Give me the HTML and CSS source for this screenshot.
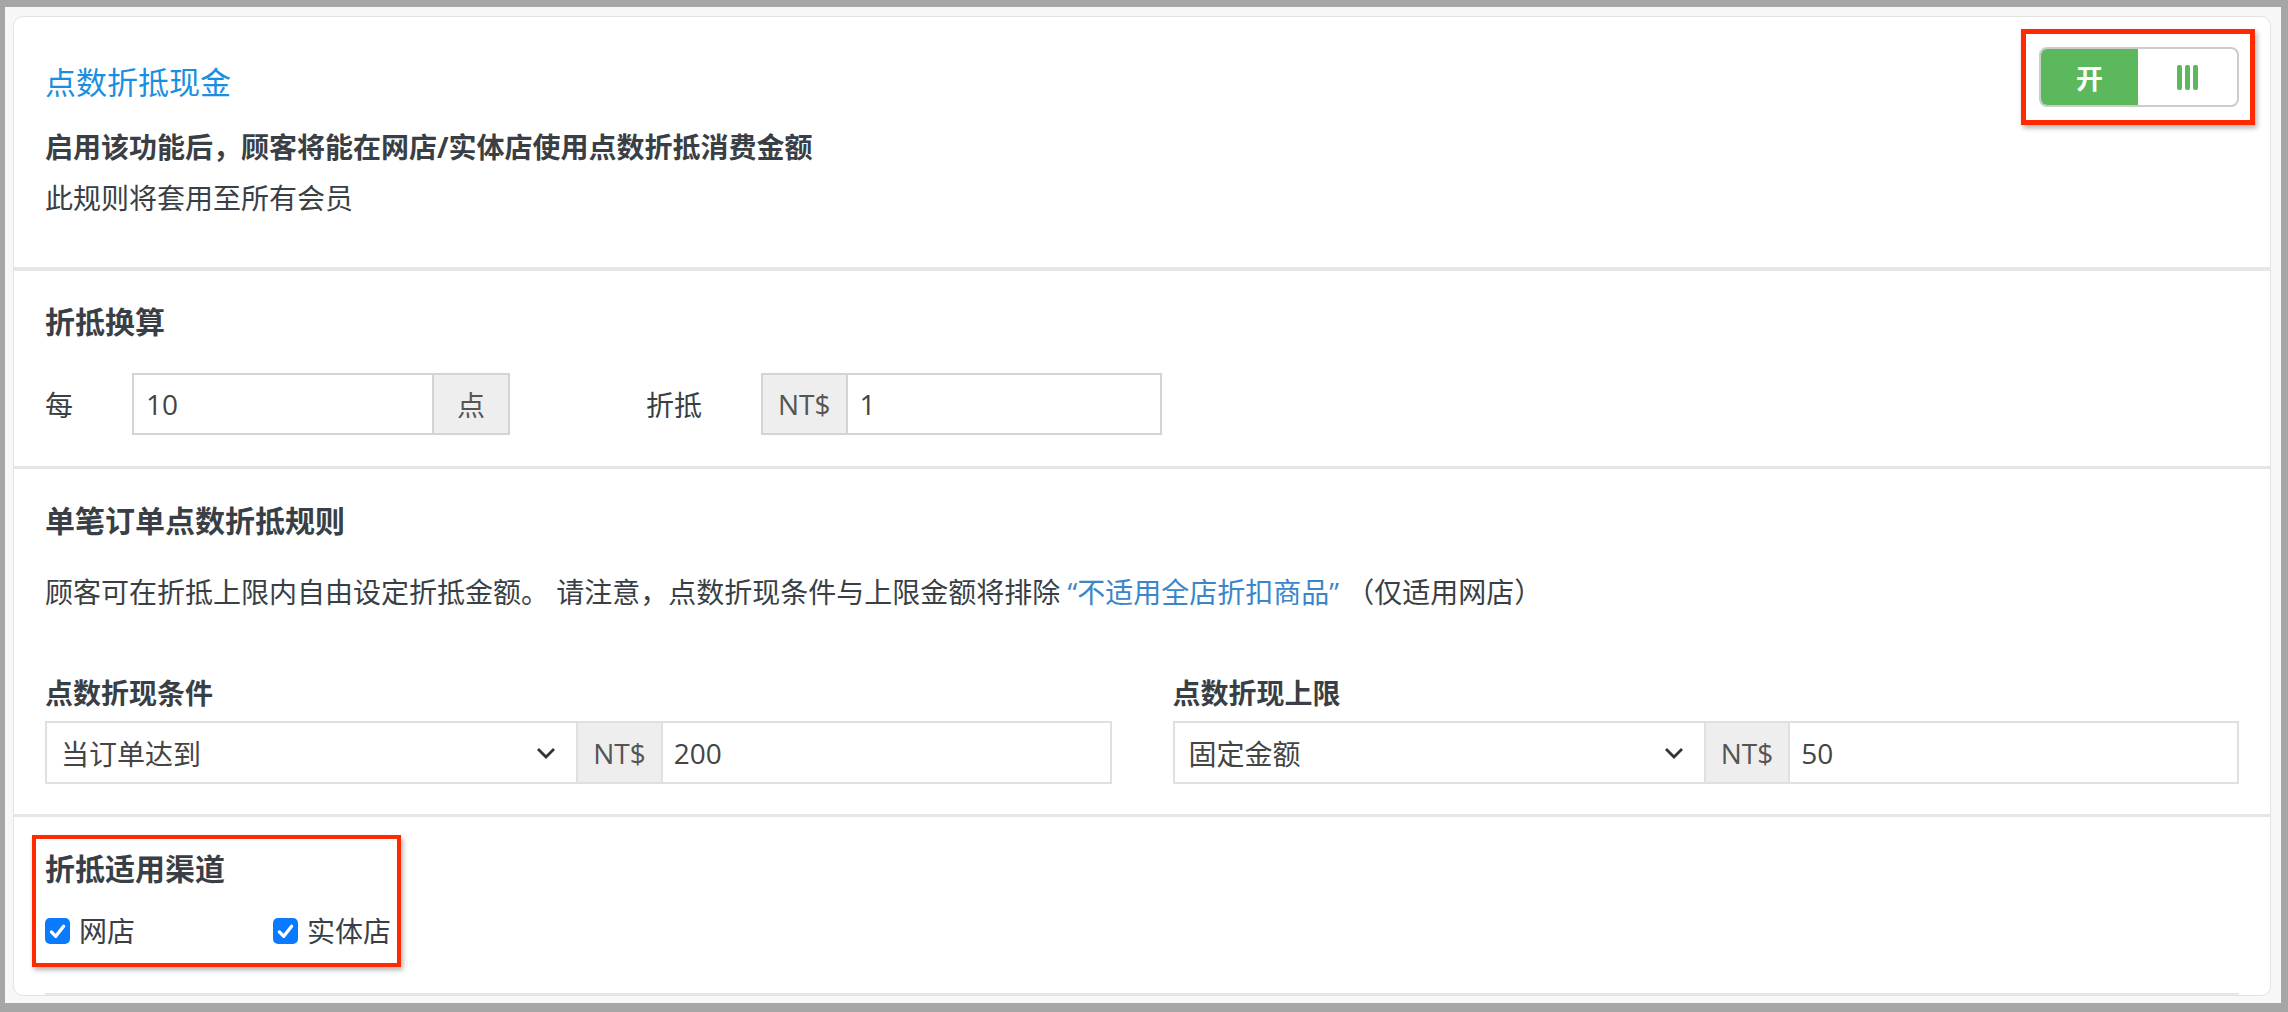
FILE: index.html
```html
<!DOCTYPE html>
<html lang="zh-CN">
<head>
    <meta charset="UTF-8">
    <meta name="viewport" content="width=device-width, initial-scale=1.0">
    <title>点数折抵现金</title>
    <link rel="stylesheet" href="styles.css">
</head>
<body>
<div class="frame">
    <div class="card">
        <!-- 开关与说明 -->
        <section class="sec sec-intro">
            <div class="intro">
                <h1 class="title">点数折抵现金</h1>
                <p class="lead">启用该功能后，顾客将能在网店/实体店使用点数折抵消费金额</p>
                <p class="note">此规则将套用至所有会员</p>
            </div>
            <div class="mark mark-toggle">
                <div class="toggle">
                    <span class="toggle-on">开</span>
                    <span class="toggle-handle"><i></i><i></i><i></i></span>
                </div>
            </div>
        </section>

        <!-- 折抵换算 -->
        <section class="sec sec-rate">
            <h2 class="sec-title">折抵换算</h2>
            <div class="rate-row">
                <span class="rate-label">每</span>
                <div class="group group-points">
                    <span class="field">10</span>
                    <span class="addon addon-points">点</span>
                </div>
                <span class="rate-label rate-label-wide">折抵</span>
                <div class="group group-cash">
                    <span class="addon">NT$</span>
                    <span class="field">1</span>
                </div>
            </div>
        </section>

        <!-- 单笔订单规则 -->
        <section class="sec sec-rule">
            <h2 class="sec-title">单笔订单点数折抵规则</h2>
            <p class="desc">顾客可在折抵上限内自由设定折抵金额。 请注意，点数折现条件与上限金额将排除 <a href="#" class="link">“不适用全店折扣商品”</a> （仅适用网店）</p>
            <div class="cols">
                <div class="col">
                    <div class="col-label">点数折现条件</div>
                    <div class="group">
                        <span class="select">当订单达到
                            <svg class="chev" viewBox="0 0 20 12" width="20" height="12"><path d="M2 2 L10 10 L18 2" fill="none" stroke="#333" stroke-width="2.8"/></svg>
                        </span>
                        <span class="addon">NT$</span>
                        <span class="field field-grow">200</span>
                    </div>
                </div>
                <div class="col">
                    <div class="col-label">点数折现上限</div>
                    <div class="group">
                        <span class="select">固定金额
                            <svg class="chev" viewBox="0 0 20 12" width="20" height="12"><path d="M2 2 L10 10 L18 2" fill="none" stroke="#333" stroke-width="2.8"/></svg>
                        </span>
                        <span class="addon">NT$</span>
                        <span class="field field-grow">50</span>
                    </div>
                </div>
            </div>
        </section>

        <!-- 适用渠道 -->
        <section class="sec sec-channel">
            <div class="mark mark-channel">
                <h2 class="sec-title">折抵适用渠道</h2>
                <div class="checks">
                    <label class="check check-first"><span class="box"><svg viewBox="0 0 24 24" width="21" height="21"><path d="M5 12.5 L10 17.5 L19 6" fill="none" stroke="#fff" stroke-width="3.8" stroke-linecap="round" stroke-linejoin="round"/></svg></span><span>网店</span></label>
                    <label class="check"><span class="box"><svg viewBox="0 0 24 24" width="21" height="21"><path d="M5 12.5 L10 17.5 L19 6" fill="none" stroke="#fff" stroke-width="3.8" stroke-linecap="round" stroke-linejoin="round"/></svg></span><span>实体店</span></label>
                </div>
            </div>
            <div class="end-line"></div>
        </section>
    </div>
</div>
</body>
</html>
```

FILE: styles.css
```css
html, body {
    margin: 0;
    padding: 0;
}

body {
    background-color: #a6a6a6;
    padding: 7px 7px 9px 5px;
    height: 1012px;
    box-sizing: border-box;
    font-family: "Open Sans", "Noto Sans CJK SC", sans-serif;
    color: #3a3f46;
}

.frame {
    background-color: #f7f7f7;
    padding: 9px 10px 7px 8px;
    height: 100%;
    box-sizing: border-box;
}

.card {
    background-color: #fff;
    border: 1px solid #e3e3e3;
    border-radius: 10px;
    height: 100%;
    box-sizing: border-box;
    overflow: hidden;
}

.sec {
    padding: 0 31px;
    box-sizing: border-box;
}

p, h1, h2 {
    margin: 0;
}

/* ---- intro ---- */
.sec-intro {
    display: flex;
    justify-content: space-between;
    align-items: flex-start;
    height: 254px;
    border-bottom: 4px solid #e6e6e6;
}

.intro {
    padding-top: 43px;
}

.title {
    font-size: 31px;
    font-weight: normal;
    line-height: 44px;
    color: #1a8fdf;
}

.lead {
    font-size: 28px;
    font-weight: bold;
    line-height: 40px;
    margin-top: 23px;
}

.note {
    font-size: 28px;
    line-height: 40px;
    margin-top: 11px;
}

.mark {
    border: 5px solid #ff2a00;
    box-shadow: 2px 3px 5px rgba(0, 0, 0, 0.3);
    box-sizing: border-box;
}

.mark-toggle {
    margin-top: 12px;
    margin-right: -16px;
    padding: 13px 11px 13px 13px;
}

.toggle {
    display: flex;
    width: 200px;
    height: 60px;
    border: 2px solid #cccccc;
    border-radius: 8px;
    box-sizing: border-box;
    overflow: hidden;
}

.toggle-on {
    width: 97px;
    background-color: #5cb85c;
    color: #fff;
    font-size: 27px;
    font-weight: bold;
    display: flex;
    align-items: center;
    justify-content: center;
}

.toggle-handle {
    flex: 1;
    display: flex;
    align-items: center;
    justify-content: center;
    gap: 3px;
}

.toggle-handle i {
    display: block;
    width: 5px;
    height: 25px;
    border-radius: 2px;
    background-color: #5cb85c;
}

/* ---- sections ---- */
.sec-title {
    font-size: 30px;
    font-weight: bold;
    line-height: 40px;
}

.sec-rate {
    padding-top: 31px;
    padding-bottom: 31px;
    border-bottom: 3px solid #e6e6e6;
}

.rate-row {
    display: flex;
    align-items: center;
    margin-top: 31px;
    font-size: 28px;
}

.rate-label {
    width: 87px;
}

.rate-label-wide {
    width: 115px;
    margin-left: 136px;
}

.group {
    display: flex;
    height: 62px;
    border: 2px solid #d4d4d4;
    box-sizing: border-box;
    font-size: 28px;
}

.group-points {
    width: 378px;
}

.group-cash {
    width: 401px;
}

.field {
    flex: 1;
    display: flex;
    align-items: center;
    padding-left: 12px;
    color: #444;
}

.addon {
    display: flex;
    align-items: center;
    justify-content: center;
    background-color: #eeeeee;
    color: #555;
    padding: 0 15px;
    border-right: 2px solid #d4d4d4;
}

.group .field + .addon {
    border-right: none;
    border-left: 2px solid #d4d4d4;
}

.addon-points {
    width: 76px;
    padding: 0;
    box-sizing: border-box;
}

.sec-rule {
    padding-top: 32px;
    padding-bottom: 30px;
    border-bottom: 3px solid #e6e6e6;
}

.desc {
    font-size: 28px;
    line-height: 40px;
    margin-top: 31px;
}

.link {
    color: #3a86c9;
    text-decoration: none;
}

.cols {
    display: grid;
    grid-template-columns: 1fr 1fr;
    column-gap: 61px;
    margin-top: 61px;
}

.col-label {
    font-size: 28px;
    font-weight: bold;
    line-height: 40px;
    margin-bottom: 8px;
}

.cols .group {
    height: 63px;
    border-color: #e0e0e0;
}

.select {
    flex: 0 0 50%;
    display: flex;
    align-items: center;
    justify-content: space-between;
    padding: 0 20px 0 14px;
    box-sizing: border-box;
    border-right: 2px solid #e0e0e0;
    color: #444;
}

.cols .addon {
    padding: 0 15px;
    border-right-color: #e0e0e0;
}

.field-grow {
    padding-left: 11px;
}

/* ---- channels ---- */
.sec-channel {
    padding-top: 18px;
}

.mark-channel {
    width: 369px;
    margin-left: -13px;
    padding: 10px 4px 12px 9px;
    border-width: 4px;
}

.checks {
    display: flex;
    align-items: center;
    margin-top: 22px;
    font-size: 28px;
    line-height: 40px;
    white-space: nowrap;
}

.check {
    display: flex;
    align-items: center;
    gap: 9px;
    flex-shrink: 0;
}

.check-first {
    width: 228px;
}

.box {
    flex-shrink: 0;
    width: 25px;
    height: 26px;
    border-radius: 5px;
    background-color: #0a7aff;
    display: flex;
    align-items: center;
    justify-content: center;
}

.end-line {
    margin-top: 26px;
    height: 3px;
    background-color: #e6e6e6;
}
```
